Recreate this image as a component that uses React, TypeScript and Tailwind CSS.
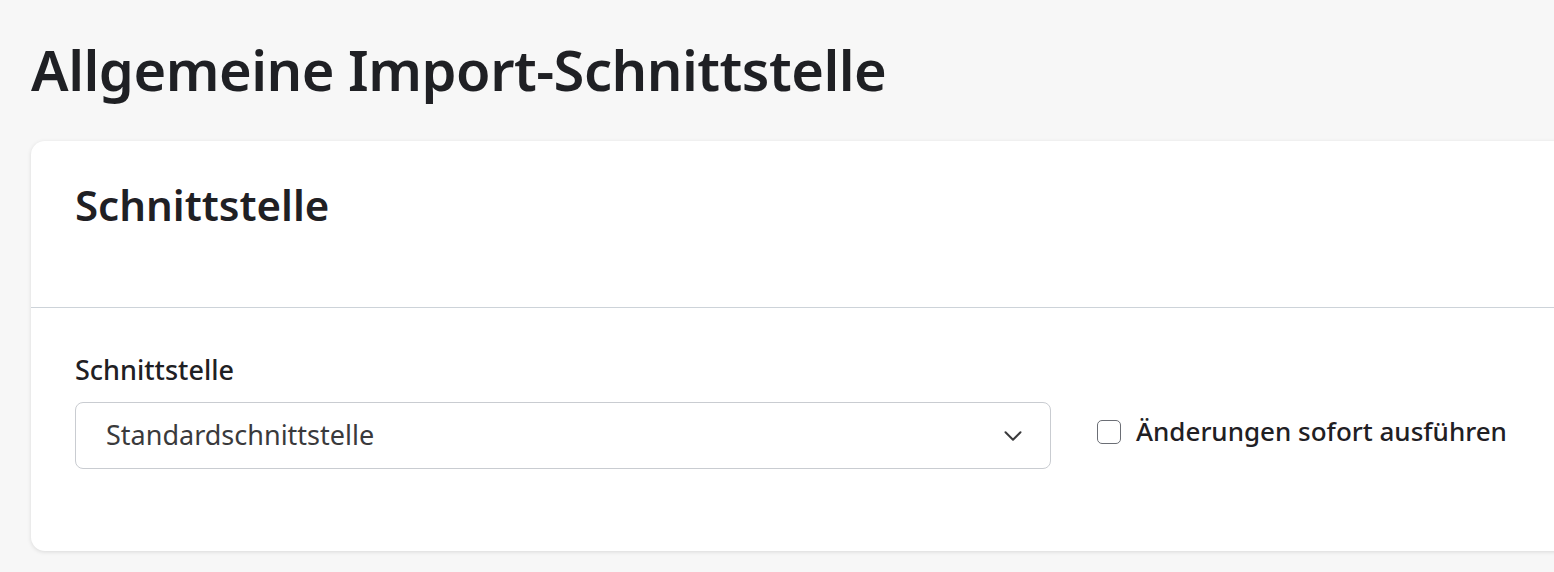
import { ChevronDown } from "lucide-react";

export default function App() {
  return (
    <div
      className="w-[1554px] h-[572px] overflow-hidden bg-[#f7f7f7] text-[#1f2024]"
      style={{ fontFamily: '"Noto Sans", "Open Sans", sans-serif' }}
    >
      {/* Page title */}
      <div className="pl-[31px] pt-[33px] h-[141px]">
        <h1 className="text-[56px] leading-[72px] font-semibold tracking-[-0.5px]">
          Allgemeine Import-Schnittstelle
        </h1>
      </div>

      {/* Card */}
      <div className="ml-[31px] w-[1600px] h-[410px] bg-white rounded-[14px] shadow-[0_1px_4px_rgba(0,0,0,0.12)]">
        <div className="h-[167px] px-[44px] pt-[36px] border-b border-[#cdd3d9]">
          <h2 className="text-[42px] leading-[56px] font-semibold">Schnittstelle</h2>
        </div>

        <div className="px-[44px] pt-[44px]">
          <label className="block text-[27px] leading-[36px] font-medium mb-[14px]">
            Schnittstelle
          </label>
          <div className="flex items-center gap-[46px]">
            <div className="relative w-[976px] h-[67px] rounded-[8px] border border-[#c9ccd1] flex items-center pl-[30px] pr-[22px]">
              <span className="flex-1 text-[27px] text-[#3a3a3c]">Standardschnittstelle</span>
              <ChevronDown className="w-[30px] h-[30px] text-[#3a3a3c]" strokeWidth={1.6} />
            </div>
            <label className="flex items-center gap-[15px] -mt-[8px]">
              <span className="w-[24px] h-[24px] rounded-[5px] border-[1.5px] border-[#6b6e75] bg-white" />
              <span className="text-[26px] font-medium text-[#1f2024]">Änderungen sofort ausführen</span>
            </label>
          </div>
        </div>
      </div>
    </div>
  );
}
